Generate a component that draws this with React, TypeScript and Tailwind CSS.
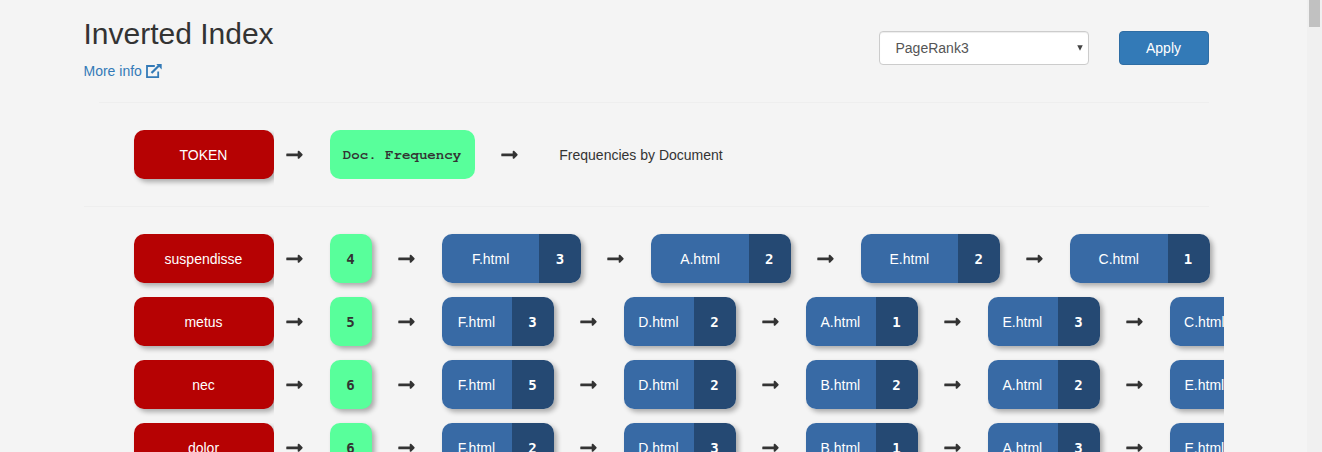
type Doc = [string, number];
type Row = { token: string; df: number; wide?: boolean; docs: Doc[] };

const rows: Row[] = [
  { token: 'suspendisse', df: 4, wide: true, docs: [['F.html', 3], ['A.html', 2], ['E.html', 2], ['C.html', 1]] },
  { token: 'metus', df: 5, docs: [['F.html', 3], ['D.html', 2], ['A.html', 1], ['E.html', 3], ['C.html', 1]] },
  { token: 'nec', df: 6, docs: [['F.html', 5], ['D.html', 2], ['B.html', 2], ['A.html', 2], ['E.html', 1]] },
  { token: 'dolor', df: 6, docs: [['F.html', 2], ['D.html', 3], ['B.html', 1], ['A.html', 3], ['E.html', 1]] },
];

function Arrow({ first }: { first?: boolean }) {
  return (
    <span className={`flex h-[49px] shrink-0 items-center ${first ? 'w-[56px] pl-3' : 'w-[69.8px] pl-[26px]'}`}>
      <svg className="h-[9px] w-[17px]" viewBox="0 0 17 9" fill="currentColor">
        <path d="M.8 3.4h10.9V1.6c0-.9 1-1.2 1.6-.6l3 3.1a.9.9 0 0 1 0 1.3l-3 3.1c-.6.6-1.6.2-1.6-.6V6.2H.8a.5.5 0 0 1-.5-.5V3.9c0-.3.2-.5.5-.5z" />
      </svg>
    </span>
  );
}

function Token({ text }: { text: string }) {
  return (
    <div className="-mb-3 -ml-3 h-[61px] w-[152px] shrink-0 overflow-hidden pb-3 pl-3">
      <div className="flex h-[49px] items-center justify-center rounded-[10px] bg-[#b60203] pr-px text-white shadow-[3px_3px_5px_rgba(0,0,0,0.3)]">
        {text}
      </div>
    </div>
  );
}

function PostingRow({ row }: { row: Row }) {
  return (
    <div className="flex h-[49px] shrink-0">
      <Token text={row.token} />
      <Arrow first />
      <div className="flex w-[42px] shrink-0 items-center justify-center rounded-[10px] bg-[#58ff9b] pr-px font-['DejaVu_Sans_Mono',monospace] text-[14px] font-bold shadow-[3px_3px_5px_rgba(0,0,0,0.3)]">
        {row.df}
      </div>
      {row.docs.map(([name, count]) => (
        <div key={name} className="flex shrink-0">
          <Arrow />
          <div className="flex rounded-[10px] text-white shadow-[3px_3px_5px_rgba(0,0,0,0.3)]">
            <div className={`flex items-center justify-center rounded-l-[10px] bg-[#386aa5] ${row.wide ? 'w-[97.6px]' : 'w-[70.2px] pr-px'}`}>{name}</div>
            <div className="flex w-[42px] items-center justify-center rounded-r-[10px] bg-[#254973] pr-px font-['DejaVu_Sans_Mono',monospace] text-[14px] font-bold">{count}</div>
          </div>
        </div>
      ))}
    </div>
  );
}

export default function App() {
  return (
    <div className="flex h-[452px] w-[1322px] overflow-hidden bg-[#f4f4f4] font-['Liberation_Sans',sans-serif] text-sm leading-5 text-[#333]">
      <main className="ml-[83.5px] w-[1140.5px] overflow-hidden">
        <header className="mr-[15px] flex h-[102px] justify-between">
          <div>
            <h1 className="pt-[17px] text-[30px] leading-[33px]">Inverted Index</h1>
            <a className="mt-[11px] flex items-center text-[#337ab7]">
              More info
              <svg className="ml-1 h-4 w-4" viewBox="0 0 16 16" fill="none">
                <path d="M8.8 3H1v11.2h11.2V8.5" stroke="currentColor" strokeWidth="1.8" />
                <path d="M5.5 10l7.3-7.3" stroke="currentColor" strokeWidth="2.2" />
                <path d="M10.3 1h5.4v5.4z" fill="currentColor" />
              </svg>
            </a>
          </div>
          <div className="flex gap-[30px] pt-[31px]">
            <div className="flex h-[34px] w-[210px] items-center justify-between rounded border border-[#ccc] bg-white pr-[5px] pl-[15.5px] text-[#555] shadow-[inset_0_1px_1px_rgba(0,0,0,0.075)]">
              PageRank3
              <svg className="h-[6px] w-[6px]" viewBox="0 0 7 7"><path d="M.3.3h6.4L3.5 6.8z" fill="#444" /></svg>
            </div>
            <button className="h-[34px] w-[90px] rounded border border-[#2e6da4] bg-[#337ab7] pr-px text-white">Apply</button>
          </div>
        </header>
        <div className="mr-[15px] ml-[15px] border-t border-[#eee]" />
        <div className="flex h-[103px] pt-[27px] pl-[50.5px]">
          <Token text="TOKEN" />
          <Arrow first />
          <div className="flex h-[49px] w-[145px] items-center justify-center rounded-[10px] bg-[#58ff9b] pr-px font-['Courier_10_Pitch','Nimbus_Mono_PS',FreeMono,'Liberation_Mono',monospace] text-[14.1px] font-bold">Doc. Frequency</div>
          <Arrow />
          <div className="flex h-[49px] items-center pl-[14.5px]">Frequencies by Document</div>
        </div>
        <div className="mr-[15px] border-t border-[#eee]" />
        <div className="flex flex-col gap-[14px] pt-[27px] pl-[50.5px]">
          {rows.map((r) => <PostingRow key={r.token} row={r} />)}
        </div>
      </main>
      <div className="ml-auto w-[15px] bg-[#f0f0f0] px-[2px]">
        <div className="h-[27px] w-[11px] bg-[#c1c1c1]" />
      </div>
    </div>
  );
}
